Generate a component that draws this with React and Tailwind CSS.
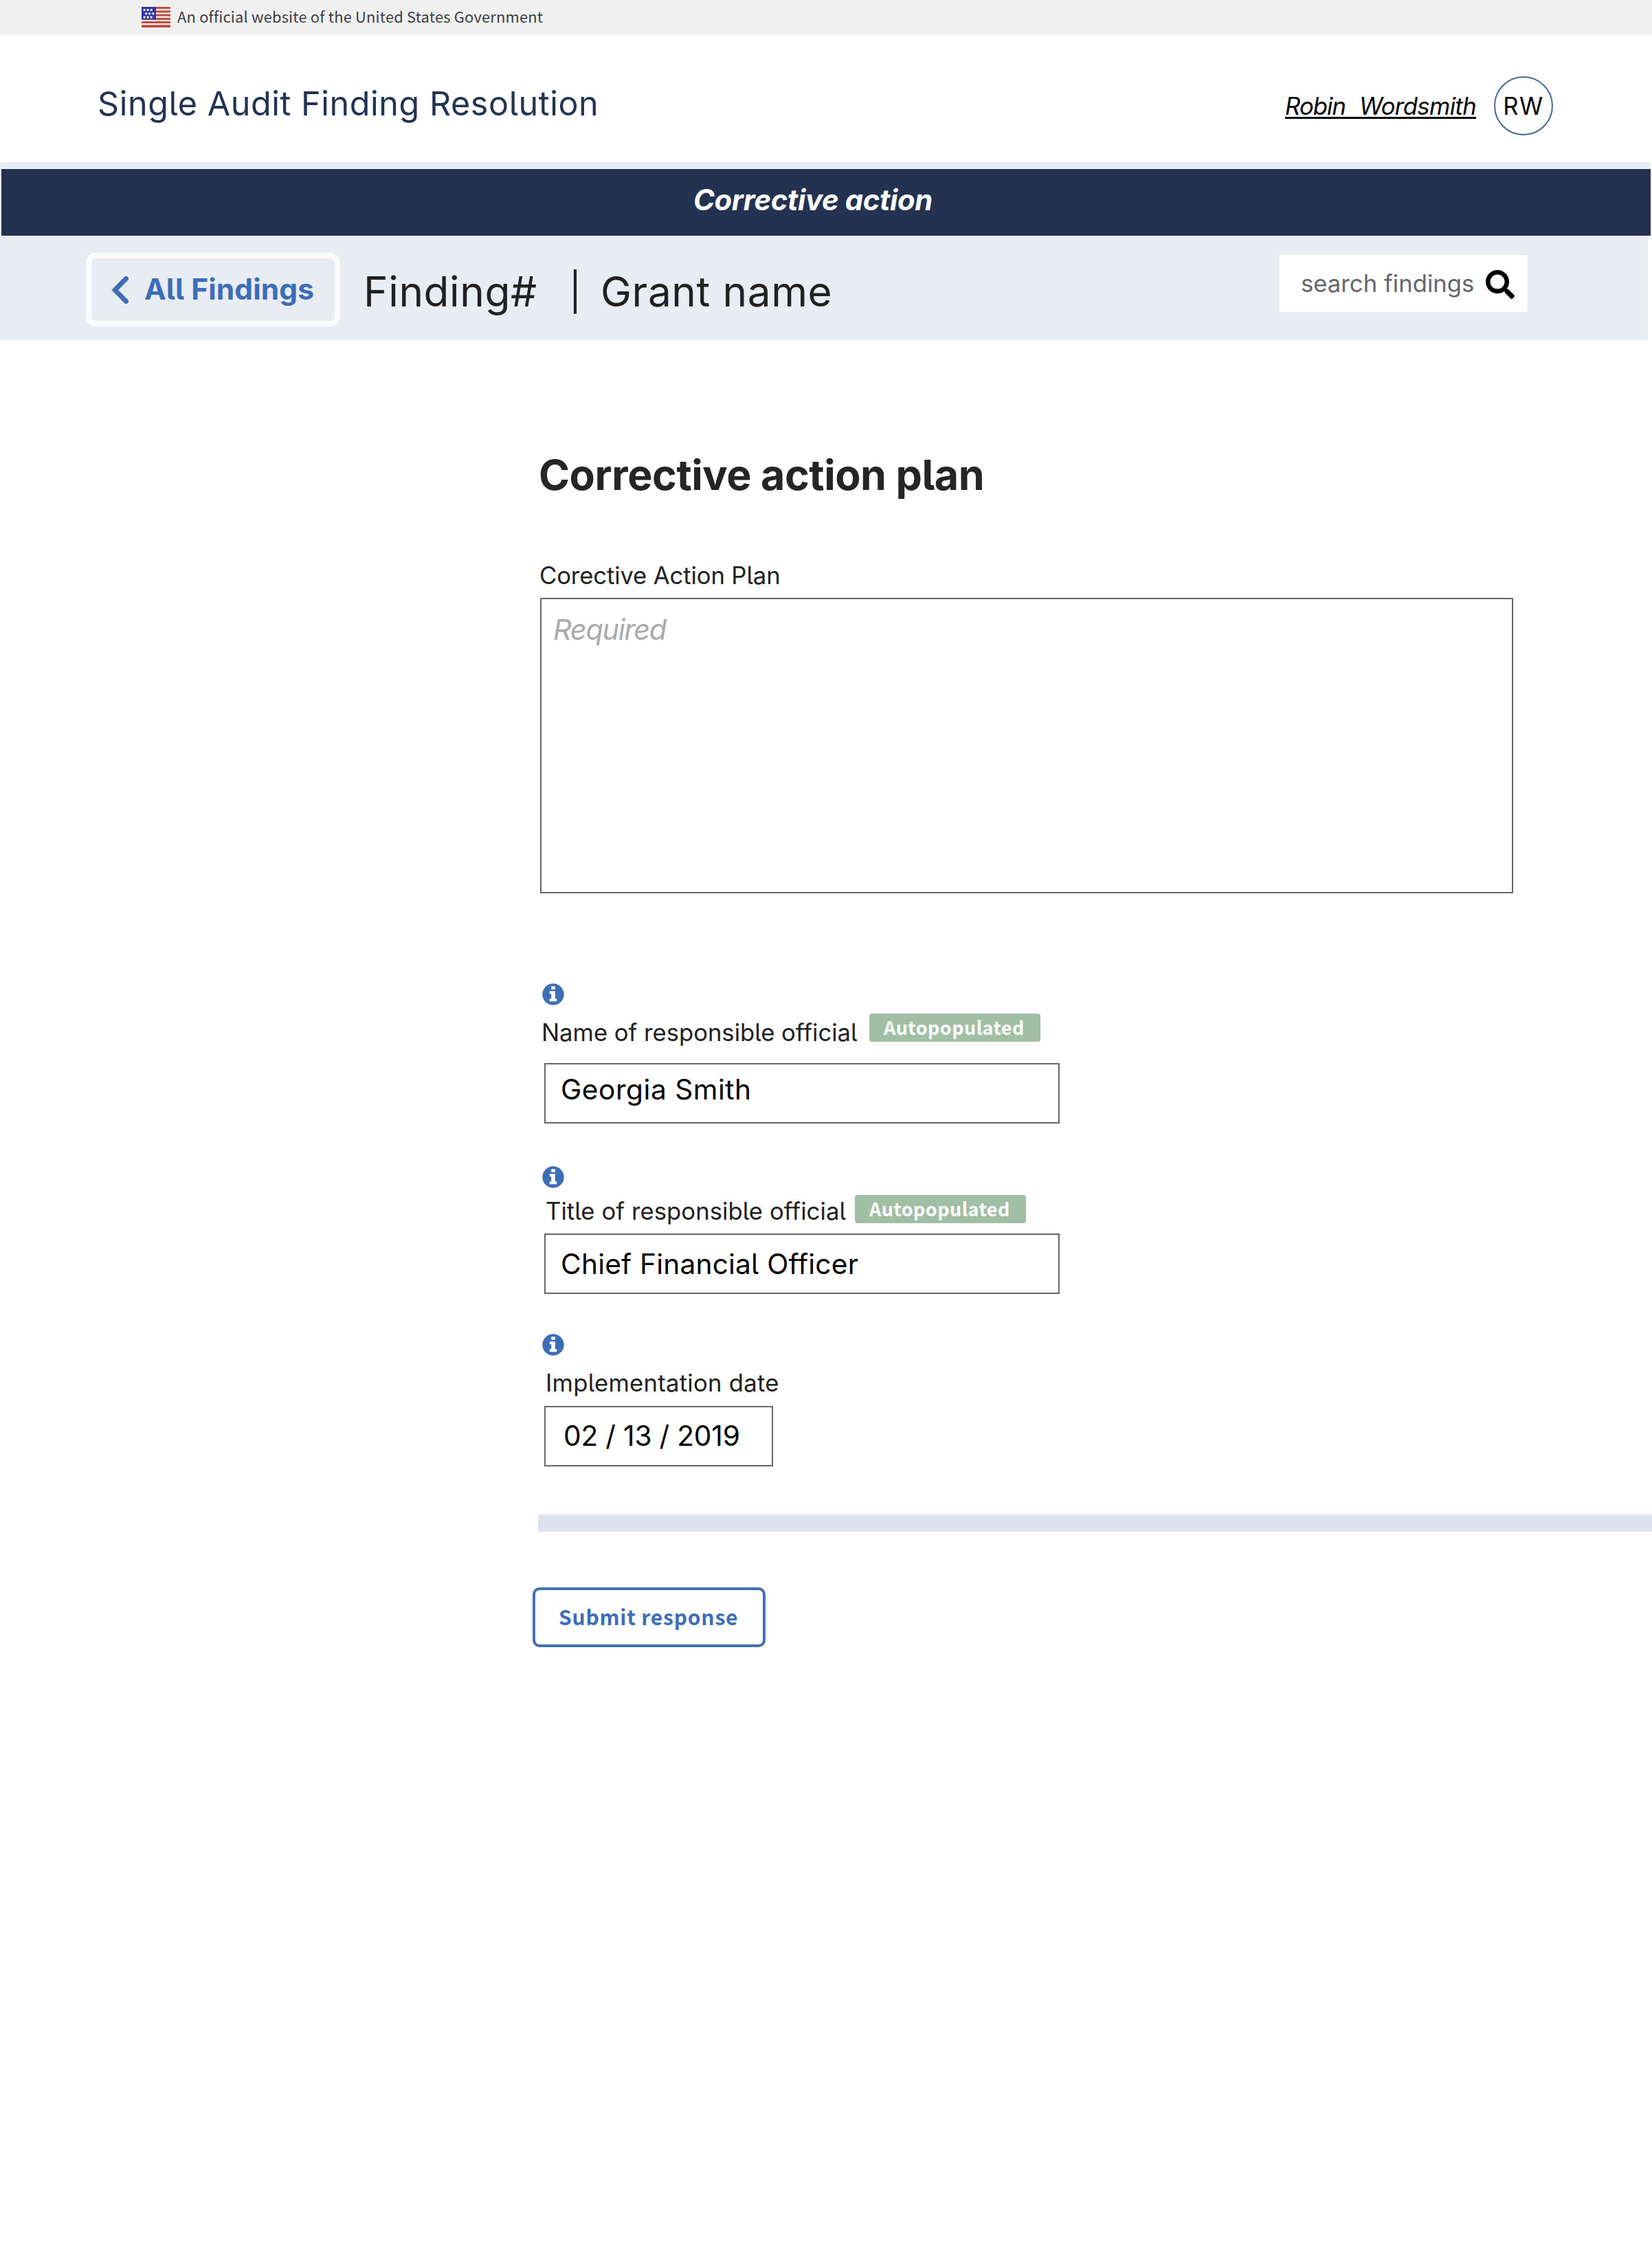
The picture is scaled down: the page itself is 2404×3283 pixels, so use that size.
import { FaSearch } from "react-icons/fa";

function Flag() {
  const stars = [
    [2.7, 3], [7.7, 3], [12.7, 3],
    [5.3, 8.3], [10.3, 8.3], [15.3, 8.3],
    [2.7, 13.6], [7.7, 13.6], [12.7, 13.6],
  ];
  return (
    <svg className="h-[30px] w-[42px]" viewBox="0 0 42 30" aria-hidden="true">
      <rect width="42" height="30" fill="#f8eae6" />
      {[0, 5.4, 10.7, 16, 21, 26.3].map((y) => (
        <rect key={y} y={y} width="42" height={y > 26 ? 3.7 : 2.9} fill="#bd4a3c" />
      ))}
      <rect width="21" height="18.4" fill="#3136a6" />
      {stars.map(([x, y]) => (
        <rect key={`${x}-${y}`} x={x} y={y} width="2.9" height="2.9" fill="#f4f4fb" />
      ))}
    </svg>
  );
}

function InfoIcon({ className }) {
  return (
    <svg className={`ml-[789px] size-8 ${className}`} viewBox="0 0 32 32" aria-hidden="true">
      <circle cx="16" cy="16" r="15.7" fill="#3e6db8" />
      <path
        d="M13.2 4.2H18.8V8.7H13.2ZM10.8 11.2H18.8V22.2H21.2V26.2H10.8V22.2H13.2V15.2H10.8Z"
        fill="white"
      />
    </svg>
  );
}

function Badge({ className }) {
  return (
    <span
      className={`h-[41px] w-[249px] rounded-[4px] bg-[#a1bfa5] pl-[21px] font-['Noto_Sans_CJK_SC',sans-serif] text-[27px] leading-[39px] font-bold tracking-[0.45px] whitespace-nowrap text-white ${className}`}
    >
      Autopopulated
    </span>
  );
}

function Label({ children, className }) {
  return (
    <div className={`h-[42px] text-[34.7px] leading-[42px] whitespace-nowrap text-[#212121] ${className}`}>
      {children}
    </div>
  );
}

function Field({ children, className }) {
  return (
    <div
      className={`ml-[792px] h-[88px] border-2 border-[#66676c] bg-white text-[40.7px] leading-[49px] whitespace-nowrap text-black ${className}`}
    >
      {children}
    </div>
  );
}

export default function App() {
  return (
    <div className="flex min-h-[3283px] w-[2404px] flex-col overflow-hidden bg-white font-['Inter',sans-serif] [font-feature-settings:'cv05']">
      <div className="flex h-[50px] items-start bg-[#f0f0f0] pl-[206px]">
        <div className="pt-2.5">
          <Flag />
        </div>
        <span className="mt-2 ml-2.5 font-['Noto_Sans_CJK_SC',sans-serif] text-[21.9px] leading-[31px] tracking-[0.19px] whitespace-nowrap text-[#3c3e45]">
          An official website of the United States Government
        </span>
      </div>

      <header className="flex h-[186px] items-start pl-[142px]">
        <h1 className="mt-[71px] w-[1728px] text-[48.5px] leading-[60px] tracking-[0.55px] text-[#223354]">
          Single Audit Finding Resolution
        </h1>
        <a className="mt-[83px] flex h-10 w-[278px] justify-between border-b-[3px] border-black text-[34.7px] leading-[42px] text-black italic">
          <span className="tracking-[-0.93px]">Robin</span>
          <span className="tracking-[-0.66px]">Wordsmith</span>
        </a>
        <div className="mt-[61px] ml-[26px] flex h-[86px] w-[86px] justify-center rounded-full border-2 border-[#42699b] pt-5 text-[34.7px] leading-[42px] tracking-[1.5px] text-black">
          RW
        </div>
      </header>

      <div className="w-[2402px] bg-[#e8ecf3] pt-2.5">
        <div className="ml-0.5 h-[97px] bg-[#223250] pt-5 pl-[1007px] text-[41.8px] leading-[50px] font-bold tracking-[-0.36px] text-white italic">
          Corrective action
        </div>
      </div>

      <div className="flex h-[152px] w-[2398px] items-start bg-[#e8ecf3] pl-[125px]">
        <button className="mt-[25px] flex h-[107px] w-[370px] items-start rounded-[14px] border-8 border-[#fafcfe] text-[#3e6db8]">
          <svg
            className="mt-[26px] ml-[29px] h-10 w-[26px]"
            viewBox="0 0 26 40"
            fill="none"
            stroke="currentColor"
            strokeWidth="7"
            aria-hidden="true"
          >
            <path d="M21.5 3.5 L5.2 20 L21.5 36.5" strokeLinecap="round" />
          </svg>
          <span className="mt-[19px] ml-[22px] text-[42.5px] leading-[51px] font-bold tracking-[0.05px] whitespace-nowrap">
            All Findings
          </span>
        </button>
        <div className="mt-[45px] ml-[34px] flex w-[1333px] items-start text-[60.3px] leading-[73px] text-[#212121]">
          <span className="w-[299px] tracking-[0.59px]">Finding#</span>
          <span className="w-[46px] text-[54px]">|</span>
          <span className="tracking-[0.6px]">Grant name</span>
        </div>
        <div className="mt-7 flex h-[83px] w-[361px] items-start bg-white">
          <span className="mt-5 ml-[31px] w-[269px] text-[34.7px] leading-[42px] whitespace-nowrap text-[#66676c]">
            search findings
          </span>
          <FaSearch className="mt-[22px] size-[42px] text-black" />
        </div>
      </div>

      <main className="flex flex-col items-start pt-[159px]">
        <h2 className="ml-[784px] text-[61px] leading-[74px] font-bold tracking-[-0.5px] text-[#252525]">
          Corrective action plan
        </h2>

        <Label className="mt-[88px] ml-[785px] tracking-[-0.14px]">Corective Action Plan</Label>
        <div className="mt-3 ml-[786px] h-[430px] w-[1416px] border-2 border-[#66676c] pt-[19px] pl-[17px] text-[41.5px] leading-[50px] tracking-[-1.3px] text-[#a9aaac] italic">
          Required
        </div>

        <InfoIcon className="mt-[131px]" />
        <div className="mt-3 ml-[788px] flex h-12 items-start">
          <Label className="mt-1.5 w-[477px] tracking-[-0.04px]">Name of responsible official</Label>
          <Badge />
        </div>
        <Field className="mt-6 w-[750px] pt-3 pl-[22px] tracking-[0.5px]">Georgia Smith</Field>

        <InfoIcon className="mt-[62px]" />
        <div className="mt-2.5 ml-[794px] flex h-11 items-start">
          <Label className="mt-0.5 w-[450px] tracking-[0.04px]">Title of responsible official</Label>
          <Badge />
        </div>
        <Field className="mt-3 w-[750px] pt-[18px] pl-[22px] tracking-[0.18px]">Chief Financial Officer</Field>

        <InfoIcon className="mt-[58px]" />
        <Label className="mt-[18px] ml-[794px] tracking-[0.24px]">Implementation date</Label>
        <Field className="mt-[13px] w-[333px] pt-[17px] pl-[26px] tracking-[-0.2px]">02 / 13 / 2019</Field>

        <div className="mt-[70px] ml-[783px] h-[25px] w-[1621px] bg-[#dce2ee]" />

        <button className="mt-[81px] ml-[775px] flex h-[87px] w-[339px] items-start rounded-[10px] border-4 border-[#4470b0] pt-4 pl-[34px] font-['Noto_Sans_CJK_SC',sans-serif] text-[30.1px] leading-[44px] font-bold tracking-[0.75px] whitespace-nowrap text-[#3e6db8]">
          Submit response
        </button>
      </main>
    </div>
  );
}
